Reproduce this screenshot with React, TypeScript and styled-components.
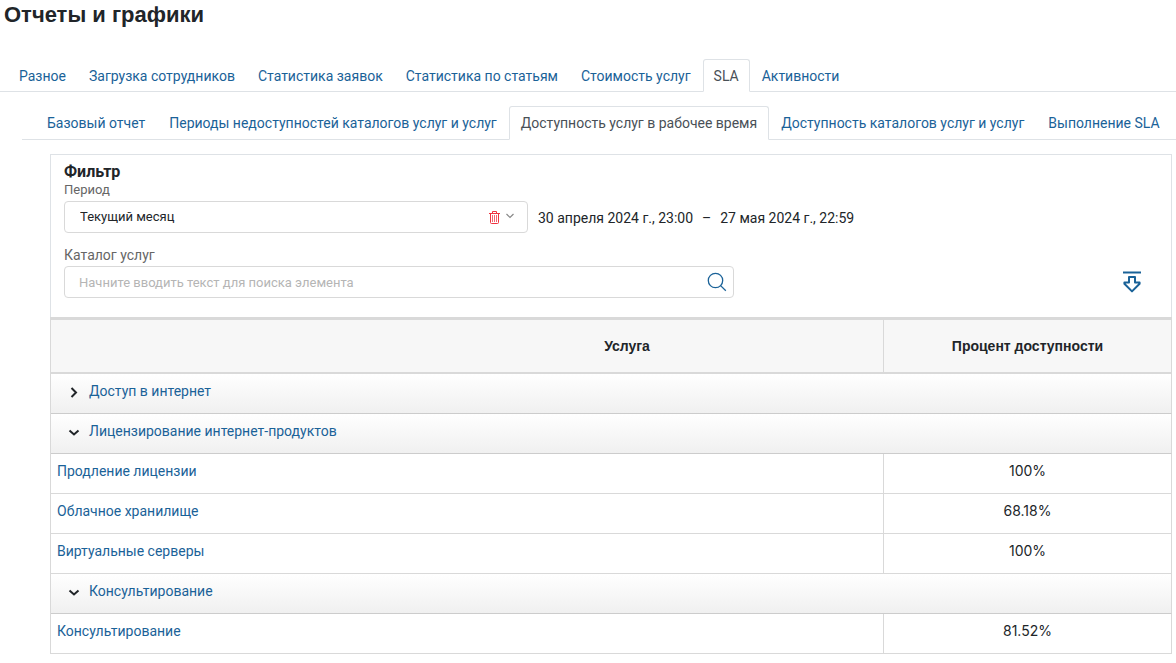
import React, { useState } from 'react';
import styled, { createGlobalStyle } from 'styled-components';

const ui = "Roboto, 'Noto Sans', sans-serif";
const digits = "Inter, 'Noto Sans', sans-serif";
const heading = "'Liberation Sans', Arial, sans-serif";
const blue = '#1a6298';
const line = '#d9d9d9';
const tabLine = '#dee2e6';

const GlobalStyle = createGlobalStyle`
  *, *::before, *::after { box-sizing: border-box; }
  body { margin: 0; background: #fff; color: #212529; font: 14px/20px ${ui}; }
  button, input, select { font: inherit; color: inherit; }
`;

const Title = styled.h1`
  margin: 0;
  padding: 0 4px;
  font: 700 22px/30px ${heading};
`;

const Tabs = styled.nav<{ $nested?: boolean }>`
  display: flex;
  gap: ${p => (p.$nested ? 0 : 1)}px;
  white-space: nowrap;
  margin: ${p => (p.$nested ? '14px 0 0 22px' : '29px 0 0')};
  padding-left: ${p => (p.$nested ? 13 : 8)}px;
  border-bottom: 1px solid ${tabLine};
`;

const Tab = styled.a<{ $active?: boolean; $large?: boolean }>`
  margin-bottom: -1px;
  padding: ${p => (p.$large ? '6px 11px' : '6px 10px 5px')};
  border: 1px solid ${p => (p.$active ? tabLine : 'transparent')};
  border-bottom-color: ${p => (p.$active ? '#fff' : 'transparent')};
  border-radius: 3px 3px 0 0;
  background: ${p => (p.$active ? '#fff' : 'none')};
  color: ${p => (p.$active ? '#495057' : blue)};
  text-decoration: none;
`;

const Report = styled.main`
  margin: 14px 4px 0 50px;
`;

const Filter = styled.form`
  padding: 8px 13px 19px;
  border: 1px solid #dee2e6;
  border-bottom: 0;
`;

const FilterTitle = styled.h2`
  margin: 0;
  font-size: 16px;
  line-height: 18px;
  font-weight: 700;
`;

const Label = styled.label<{ $small?: boolean }>`
  display: block;
  font-size: ${p => (p.$small ? 13 : 14)}px;
  line-height: ${p => (p.$small ? 18 : 22)}px;
  padding-bottom: ${p => (p.$small ? 2 : 0)}px;
  color: #666;
`;

const FilterRow = styled.div`
  display: flex;
  align-items: center;
  gap: 10px;
  margin-bottom: 11px;
`;

const SearchRow = styled.div`
  display: flex;
  align-items: center;
  justify-content: space-between;
  padding-right: 16px;
`;

const Field = styled.div<{ $width: number }>`
  position: relative;
  flex: 0 1 ${p => p.$width}px;
`;

const Select = styled.select`
  display: block;
  width: 100%;
  height: 32px;
  padding: 0 50px 0 15px;
  border: 1px solid ${line};
  border-radius: 4px;
  background: #fff;
  appearance: none;
  font-size: 13px;
`;

const SearchInput = styled.input`
  display: block;
  width: 100%;
  height: 32px;
  padding: 0 40px 0 14px;
  border: 1px solid ${line};
  border-radius: 4px;
  font-size: 13px;
  &::placeholder { color: #b5b5b5; }
`;

const IconButton = styled.button`
  display: flex;
  padding: 0;
  border: 0;
  background: none;
  color: ${blue};
  cursor: pointer;
`;

const FieldIcons = styled.div<{ $right: number }>`
  position: absolute;
  top: 0;
  right: ${p => p.$right}px;
  height: 100%;
  display: flex;
  align-items: center;
  gap: 5px;
  color: #888;
  pointer-events: none;
  button { pointer-events: auto; }
`;

const Range = styled.p`
  display: flex;
  gap: 9px;
  margin: 0;
  padding-top: 2px;
  white-space: nowrap;
`;

const Table = styled.table`
  width: 100%;
  table-layout: fixed;
  border-collapse: separate;
  border-spacing: 0;
  border-top: 3px solid ${line};
  border-left: 1px solid ${line};
`;

const Head = styled.th<{ $indent?: boolean }>`
  width: ${p => (p.$indent ? 'auto' : '288px')};
  height: 54px;
  padding: 0 0 0 ${p => (p.$indent ? 320 : 0)}px;
  background: #f7f7f7;
  border-right: 1px solid ${line};
  border-bottom: 2px solid ${line};
  font: 700 14px/20px ${heading};
`;

const Cell = styled.td<{ $value?: boolean }>`
  height: 40px;
  padding: 7px 6px 12px;
  border-right: 1px solid ${line};
  border-bottom: 1px solid ${line};
  text-align: ${p => (p.$value ? 'center' : 'left')};
  font-family: ${p => (p.$value ? digits : ui)};
`;

const GroupCell = styled.td`
  height: 40px;
  padding: 7px 16px 12px;
  border-right: 1px solid ${line};
  border-bottom: 1px solid #ccc;
  background: linear-gradient(#fff, #f0f0f0);
`;

const GroupLine = styled.div`
  display: flex;
  gap: 8px;
`;

const Toggle = styled(IconButton)`
  padding-top: 4px;
  color: #212529;
`;

const Link = styled.a`
  color: ${blue};
  text-decoration: none;
`;

const sections = ['Разное', 'Загрузка сотрудников', 'Статистика заявок', 'Статистика по статьям', 'Стоимость услуг', 'SLA', 'Активности'];
const reports = ['Базовый отчет', 'Периоды недоступностей каталогов услуг и услуг', 'Доступность услуг в рабочее время', 'Доступность каталогов услуг и услуг', 'Выполнение SLA'];

type Service = { name: string; value: string };
const groups: { name: string; services: Service[] }[] = [
  { name: 'Доступ в интернет', services: [] },
  {
    name: 'Лицензирование интернет-продуктов',
    services: [
      { name: 'Продление лицензии', value: '100%' },
      { name: 'Облачное хранилище', value: '68.18%' },
      { name: 'Виртуальные серверы', value: '100%' },
    ],
  },
  { name: 'Консультирование', services: [{ name: 'Консультирование', value: '81.52%' }] },
];

const TrashIcon = () => (
  <svg width="11" height="13" viewBox="0 0 11 13" fill="none" stroke="#f03340">
    <path d="M0 2.5h11M3.5 2V.5h4V2M1.5 2.5v9q0 1 1 1h6q1 0 1-1v-9" />
    <path d="M3.5 4v7M5.5 4v7M7.5 4v7" strokeOpacity=".75" />
  </svg>
);

const SmallChevron = () => (
  <svg width="10" height="10" viewBox="0 0 10 10" fill="none" stroke="currentColor" strokeWidth="1.2">
    <path d="M1.5 2 5 5.5 8.5 2" />
  </svg>
);

const SearchIcon = () => (
  <svg width="20" height="20" viewBox="0 0 20 20" fill="none" stroke="currentColor" strokeWidth="1.3">
    <circle cx="8.5" cy="8.5" r="7.2" />
    <path d="m13.6 13.6 5.2 5.2" />
  </svg>
);

const ExportIcon = () => (
  <svg width="20" height="24" viewBox="0 0 20 24" fill="none" stroke="currentColor" strokeWidth="2">
    <path d="M1 2.5h18" />
    <path d="M7 7h6v5.5h4.6v1.2L10 21.4l-7.6-7.7v-1.2H7z" strokeLinejoin="round" />
  </svg>
);

const GroupChevron = ({ open }: { open: boolean }) => (
  <svg width="14" height="14" viewBox="0 0 14 14" fill="none" stroke="currentColor" strokeWidth="2">
    <path d={open ? 'M2.5 5.5 7 9.5l4.5-4' : 'M4.5 3 9 7.5 4.5 12'} />
  </svg>
);

export default function App() {
  const [open, setOpen] = useState([false, true, true]);
  const toggle = (i: number) => setOpen(open.map((o, n) => (n === i ? !o : o)));

  return (
    <>
      <GlobalStyle />
      <Title>Отчеты и графики</Title>
      <Tabs aria-label="Разделы">
        {sections.map(s => <Tab key={s} href="#" $active={s === 'SLA'}>{s}</Tab>)}
      </Tabs>
      <Tabs $nested aria-label="Отчеты">
        {reports.map((s, i) => <Tab key={s} href="#" $large $active={i === 2}>{s}</Tab>)}
      </Tabs>
      <Report>
        <Filter onSubmit={e => e.preventDefault()}>
          <FilterTitle>Фильтр</FilterTitle>
          <Label $small htmlFor="period">Период</Label>
          <FilterRow>
            <Field $width={464}>
              <Select id="period"><option>Текущий месяц</option></Select>
              <FieldIcons $right={13}>
                <IconButton type="button" aria-label="Очистить"><TrashIcon /></IconButton>
                <SmallChevron />
              </FieldIcons>
            </Field>
            <Range><span>30 апреля 2024 г., 23:00</span><span>–</span><span>27 мая 2024 г., 22:59</span></Range>
          </FilterRow>
          <Label htmlFor="catalog">Каталог услуг</Label>
          <SearchRow>
            <Field $width={670}>
              <SearchInput id="catalog" placeholder="Начните вводить текст для поиска элемента" />
              <FieldIcons $right={7}>
                <IconButton aria-label="Найти"><SearchIcon /></IconButton>
              </FieldIcons>
            </Field>
            <IconButton type="button" aria-label="Скачать"><ExportIcon /></IconButton>
          </SearchRow>
        </Filter>
        <Table>
          <thead>
            <tr><Head $indent>Услуга</Head><Head>Процент доступности</Head></tr>
          </thead>
          {groups.map((g, i) => (
            <tbody key={g.name}>
              <tr>
                <GroupCell colSpan={2}>
                  <GroupLine>
                    <Toggle type="button" aria-label={g.name} aria-expanded={open[i]} onClick={() => toggle(i)}>
                      <GroupChevron open={open[i]} />
                    </Toggle>
                    <Link href="#">{g.name}</Link>
                  </GroupLine>
                </GroupCell>
              </tr>
              {open[i] && g.services.map(s => (
                <tr key={s.name}>
                  <Cell><Link href="#">{s.name}</Link></Cell>
                  <Cell $value>{s.value}</Cell>
                </tr>
              ))}
            </tbody>
          ))}
        </Table>
      </Report>
    </>
  );
}
